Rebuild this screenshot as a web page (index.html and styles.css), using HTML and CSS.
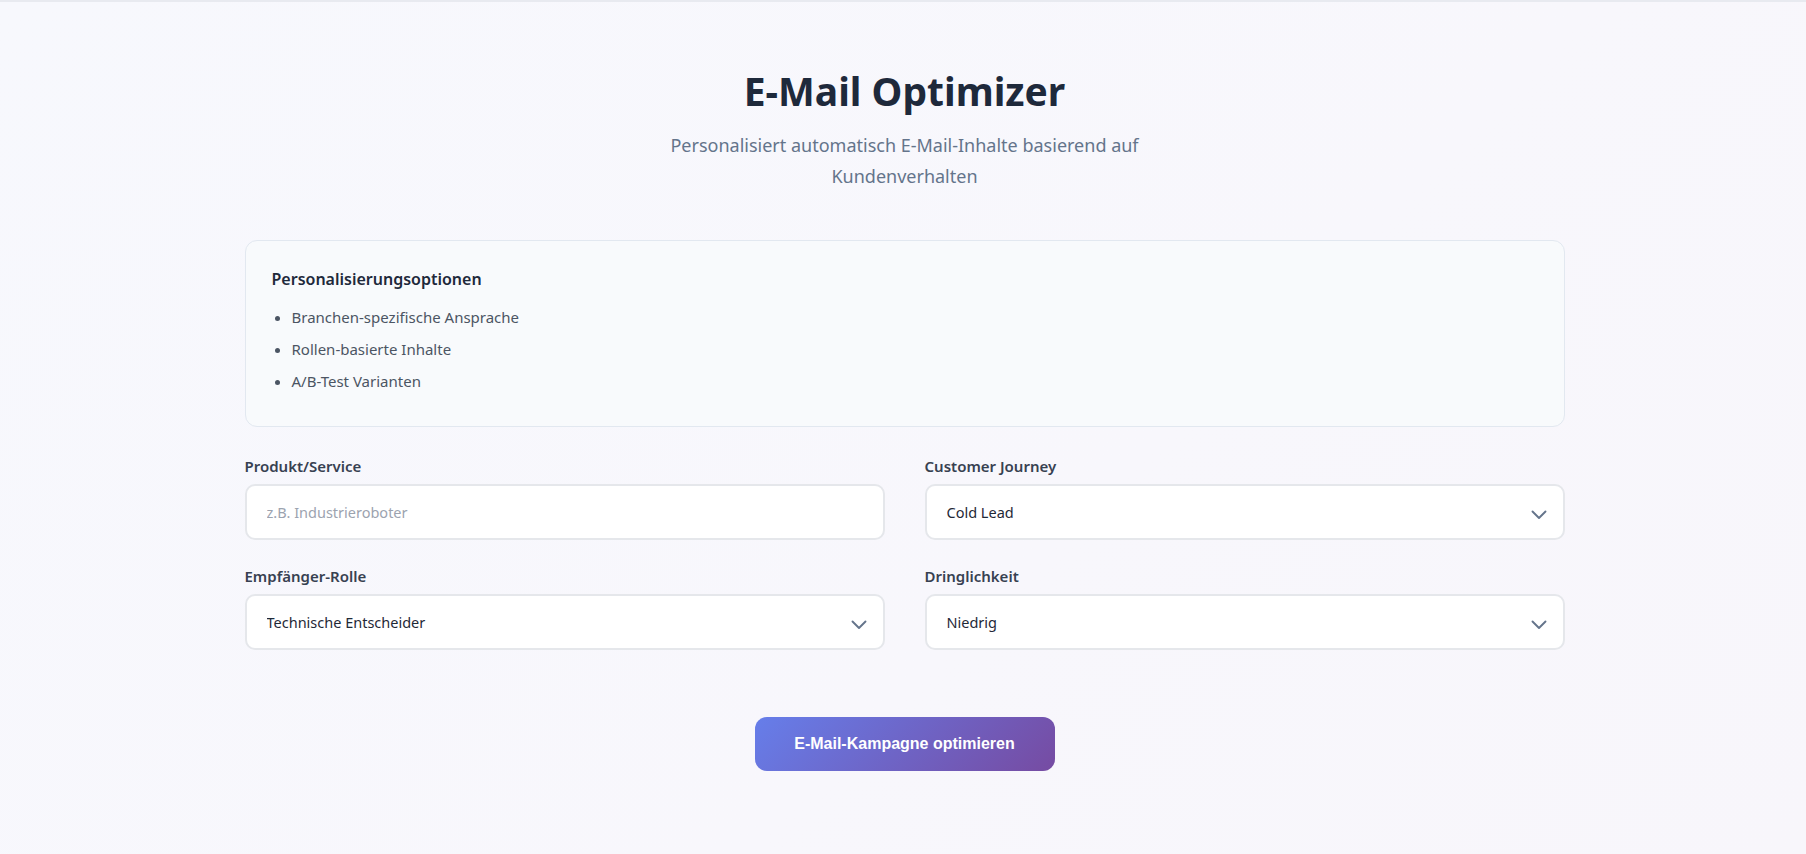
FILE: index.html
```html
<!DOCTYPE html>
<html lang="de">
<head>
<meta charset="utf-8">
<title>E-Mail Optimizer</title>
<link rel="stylesheet" href="styles.css">
</head>
<body>
<div class="page">
  <main class="container">
    <header class="hero">
      <h1 class="title">E-Mail Optimizer</h1>
      <p class="subtitle">Personalisiert automatisch E-Mail-Inhalte basierend auf Kundenverhalten</p>
    </header>

    <section class="card">
      <h2 class="card-title">Personalisierungsoptionen</h2>
      <ul class="card-list">
        <li>Branchen-spezifische Ansprache</li>
        <li>Rollen-basierte Inhalte</li>
        <li>A/B-Test Varianten</li>
      </ul>
    </section>

    <form class="form">
      <div class="field">
        <label class="label" for="produkt">Produkt/Service</label>
        <input class="control" id="produkt" type="text" placeholder="z.B. Industrieroboter">
      </div>
      <div class="field">
        <label class="label" for="journey">Customer Journey</label>
        <div class="select-wrap">
          <select class="control" id="journey">
            <option>Cold Lead</option>
          </select>
          <svg class="chevron" viewBox="0 0 16 16" width="16" height="16"><path d="M1.5 4.5L8 11l6.5-6.5" fill="none" stroke="#64748b" stroke-width="1.9" stroke-linecap="round" stroke-linejoin="round"/></svg>
        </div>
      </div>
      <div class="field">
        <label class="label" for="rolle">Empfänger-Rolle</label>
        <div class="select-wrap">
          <select class="control" id="rolle">
            <option>Technische Entscheider</option>
          </select>
          <svg class="chevron" viewBox="0 0 16 16" width="16" height="16"><path d="M1.5 4.5L8 11l6.5-6.5" fill="none" stroke="#64748b" stroke-width="1.9" stroke-linecap="round" stroke-linejoin="round"/></svg>
        </div>
      </div>
      <div class="field">
        <label class="label" for="dring">Dringlichkeit</label>
        <div class="select-wrap">
          <select class="control" id="dring">
            <option>Niedrig</option>
          </select>
          <svg class="chevron" viewBox="0 0 16 16" width="16" height="16"><path d="M1.5 4.5L8 11l6.5-6.5" fill="none" stroke="#64748b" stroke-width="1.9" stroke-linecap="round" stroke-linejoin="round"/></svg>
        </div>
      </div>
    </form>

    <div class="actions">
      <button class="btn" type="button">E-Mail-Kampagne optimieren</button>
    </div>
  </main>
</div>
</body>
</html>
```

FILE: styles.css
```css
* { box-sizing: border-box; }

html, body {
  margin: 0;
  padding: 0;
}

body {
  font-family: "Noto Sans", "Open Sans", sans-serif;
  background: linear-gradient(135deg, #f7f8fd 0%, #f8f7fc 60%, #f8f6fb 100%);
  min-height: 854px;
  color: #1e293b;
}

.page {
  border-top: 2px solid #e8eaf0;
  min-height: 854px;
  padding-left: 3px;
}

.container {
  max-width: 1320px;
  margin: 0 auto;
  padding: 65px 0 60px;
}

.hero {
  text-align: center;
}

.title {
  margin: 0;
  font-size: 39px;
  line-height: 48px;
  font-weight: 700;
  color: #1e293b;
}

.subtitle {
  margin: 15px auto 0;
  max-width: 520px;
  font-size: 18px;
  line-height: 31px;
  color: #64748b;
}

.card {
  margin-top: 48px;
  background: #f8fafc;
  border: 1px solid #e2e8f0;
  border-radius: 12px;
  padding: 24px 26px 29px;
}

.card-title {
  margin: 0 0 8px;
  font-size: 16px;
  line-height: 28px;
  font-weight: 600;
  color: #1e293b;
}

.card-list {
  margin: 0;
  padding-left: 20px;
  color: #4b5563;
  font-size: 15px;
}

.card-list li {
  line-height: 24px;
  padding: 4px 0;
}

.card-list li::marker {
  color: #4b5563;
}

.form {
  margin-top: 29px;
  display: grid;
  grid-template-columns: 1fr 1fr;
  column-gap: 40px;
  row-gap: 26px;
}

.field {
  display: flex;
  flex-direction: column;
  gap: 8px;
}

.label {
  font-size: 15px;
  line-height: 20px;
  font-weight: 600;
  color: #374151;
}

.control {
  width: 100%;
  height: 56px;
  border: 2px solid #e5e7eb;
  border-radius: 10px;
  background: #fff;
  padding: 0 20px;
  font-family: inherit;
  font-size: 14.5px;
  color: #1f2937;
  outline: none;
  appearance: none;
  -webkit-appearance: none;
}

.control::placeholder {
  color: #9ca3af;
}

.select-wrap {
  position: relative;
}

.chevron {
  position: absolute;
  right: 18px;
  top: 23px;
  pointer-events: none;
}

.actions {
  display: flex;
  justify-content: center;
  margin-top: 67px;
}

.btn {
  width: 300px;
  height: 54px;
  border: none;
  border-radius: 12px;
  background: linear-gradient(135deg, #667eea 0%, #764ba2 100%);
  color: #fff;
  font-family: "Liberation Sans", Arial, sans-serif;
  font-size: 16px;
  font-weight: 700;
  cursor: pointer;
}
```
